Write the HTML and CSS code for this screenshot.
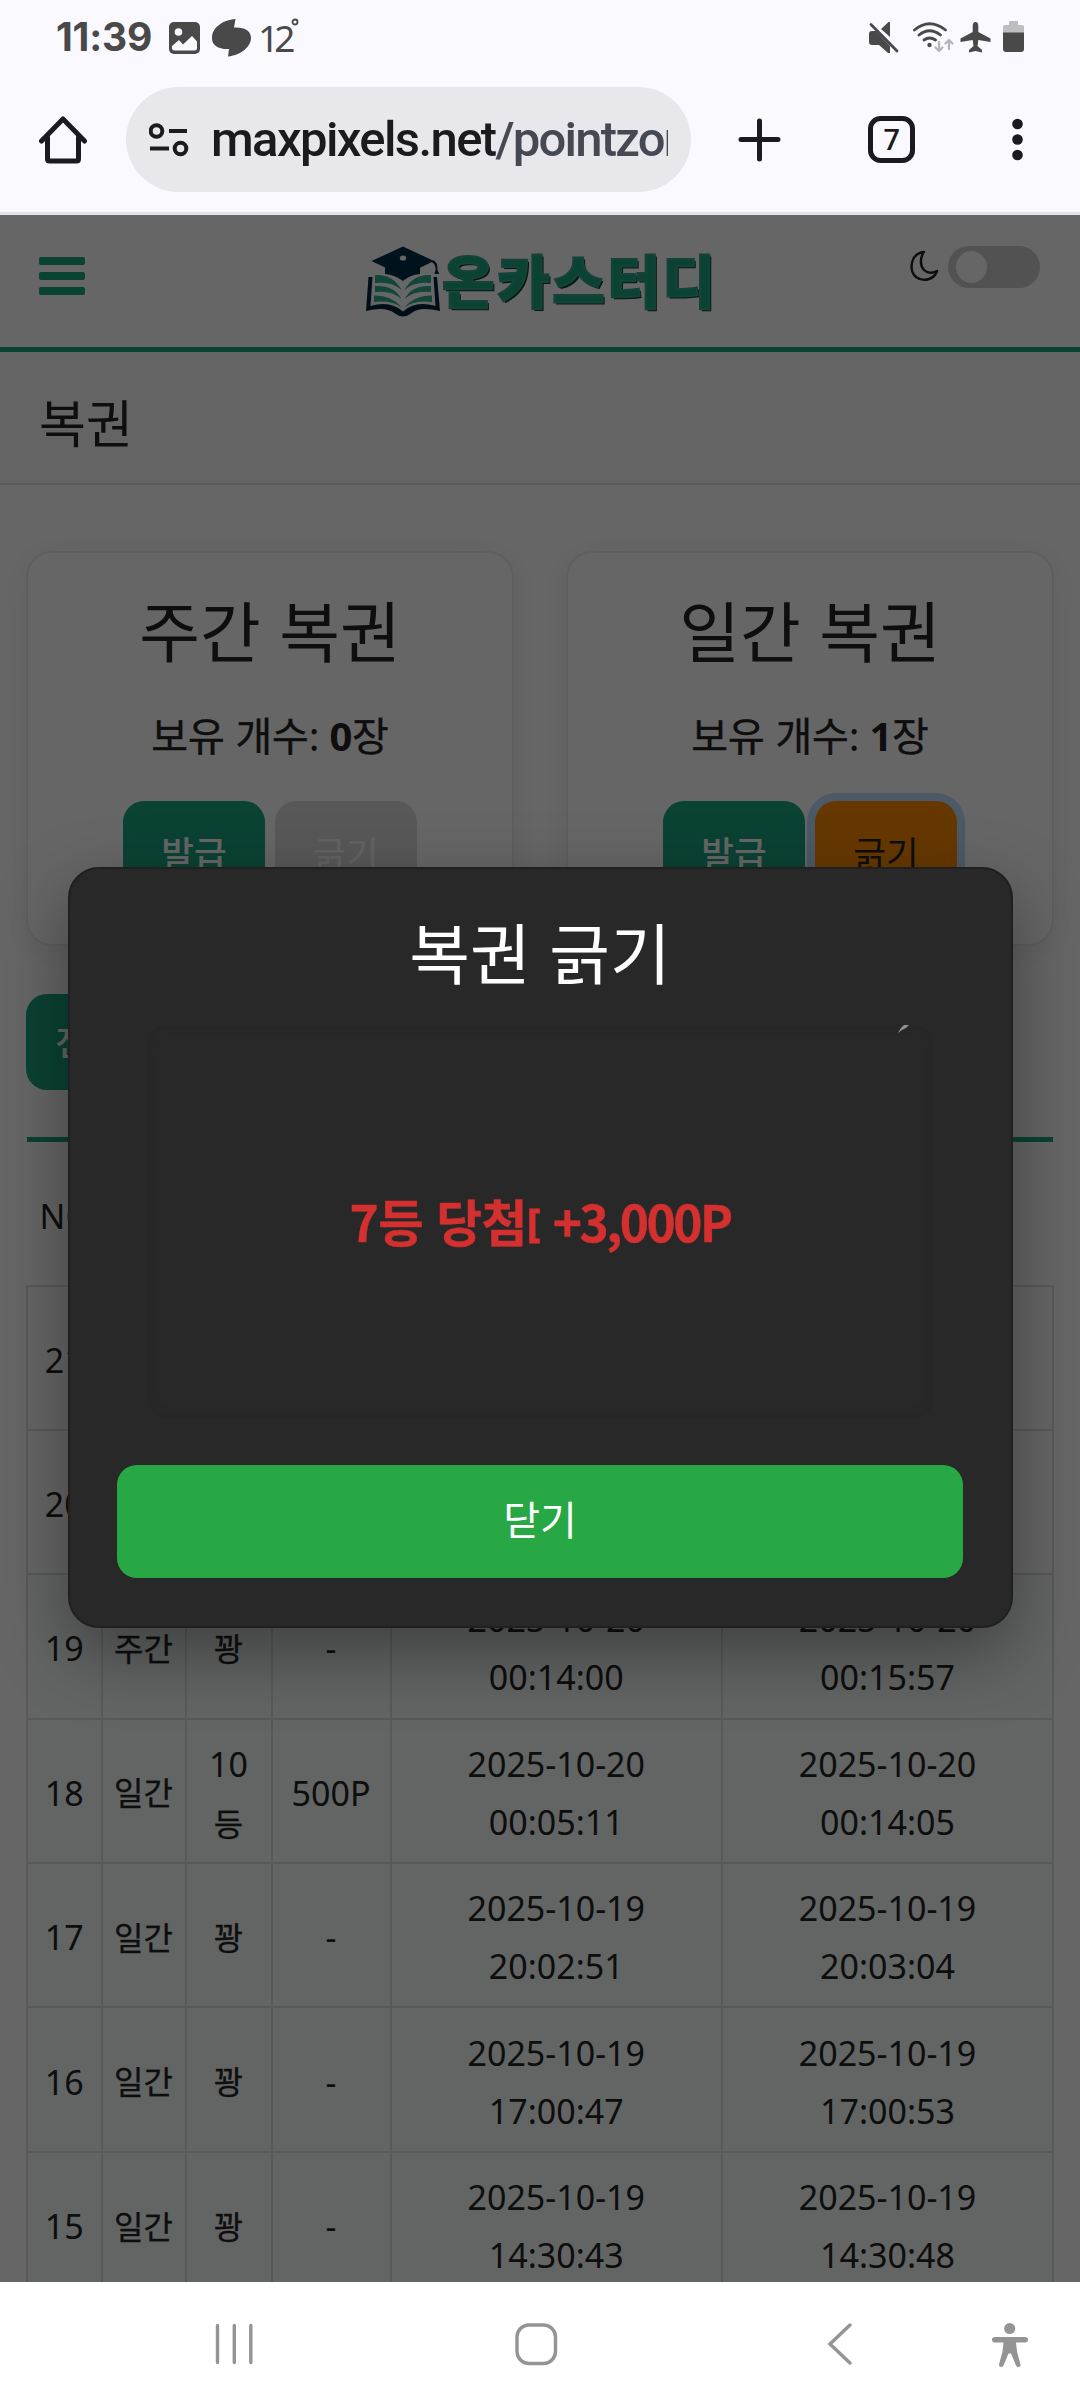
FILE: index.html
```html
<!DOCTYPE html>
<html lang="ko">
<head>
<meta charset="utf-8">
<meta name="viewport" content="width=device-width">
<title>복권</title>
<link rel="stylesheet" href="styles.css">
</head>
<body>
<div class="status">
  <span class="clock">11:39</span>
  <svg class="st-image" width="32" height="32" viewBox="0 0 32 32"><rect width="31" height="32" rx="5" fill="#494949"/><circle cx="9.5" cy="10" r="3.8" fill="#faf9ff"/><path d="M3 24l7-6 4 4.500 9-8.500 5 5.500V26q0 2.500-2.500 2.500h-20Q3 28.500 3 26z" fill="#faf9ff"/></svg>
  <svg class="st-leaf" width="40" height="38" viewBox="0 0 40 38"><path d="M23.500 0 22 8.500C33 8 39 12 39 19c0 8-9 17-23 18.500L17 30C7 30.500 0 27 0 19 0 9 10 1 23.500 0z" fill="#494949"/></svg>
  <span class="temp">12<svg width="8" height="8" viewBox="0 0 8 8"><circle cx="4" cy="4" r="2.500" fill="none" stroke="#494949" stroke-width="1.800"/></svg></span>
  <svg class="st-right" width="160" height="36" viewBox="867 20 160 36">
    <g fill="#494949"><path d="M870 34q0-3 3-3h4l14 15v7h-2l-9-8h-7q-3 0-3-3zM882 29l7.500-7h1.500v15z"/><path d="M872 24.500l26 26.500" stroke="#494949" stroke-width="2.800" stroke-linecap="round"/>
    <circle cx="930.500" cy="45" r="2.200"/></g>
    <g fill="none" stroke="#494949" stroke-width="2.800" stroke-linecap="round"><path d="M915.500 30q15-12.500 31 0M920 35q10.500-8.500 21.500 0M925 40q5.500-4 11.500 0"/></g>
    <g fill="none" stroke="#b4b4b7" stroke-width="2.200" stroke-linecap="round" stroke-linejoin="round"><path d="M940 42v9m-3.500-3.500l3.500 3.500 3.500-3.500M950 49v-9m-3.500 3.500l3.500-3.500 3.500 3.500"/></g>
    <path d="M976.500 22q2.800 0 2.800 4v6l12.200 6.500v3.500l-12.200-2-.8 6 4.500 4v2.500l-6.500-1.500-6.500 1.500V50l4.500-4-.8-6-12.200 2v-3.500l12.200-6.500v-6q0-4 2.800-4z" fill="#494949"/>
    <path d="M1010 25v-3q0-1 1-1h7q1 0 1 1v3h4q2 0 2 2v6h-21v-6q0-2 2-2z" fill="#bebec0"/><path d="M1004 32.500h21V49q0 3-3 3h-15q-3 0-3-3z" fill="#494949"/>
  </svg>
</div>
<div class="toolbar">
  <svg class="tb-home" width="48" height="48" viewBox="0 0 48 48"><path d="M2.500 25 24 3l21.500 22M8.500 21v22q0 2 2 2h27q2 0 2-2V21" fill="none" stroke="#1b1b1f" stroke-width="5" stroke-linecap="round" stroke-linejoin="round"/></svg>
  <div class="omnibox">
    <svg width="40" height="34" viewBox="0 0 40 34"><g fill="none" stroke="#1b1b1f" stroke-width="4"><circle cx="7.500" cy="8" r="5.800"/><circle cx="31.500" cy="25.500" r="5.800"/><path d="M20 8h18M1 25.500h19"/></g></svg>
    <div class="url">maxpixels.net<span>/pointzone</span></div>
  </div>
  <svg class="tb-right" width="300" height="52" viewBox="730 114 300 52"><g fill="none" stroke="#1b1b1f" stroke-width="5" stroke-linecap="round"><path d="M741 139.500h37M759.500 121v38"/><rect x="870.500" y="118.500" width="42" height="42" rx="10"/></g><text x="891.800" y="150" text-anchor="middle" class="tabs">7</text><g fill="#1b1b1f"><circle cx="1017.500" cy="124" r="5.300"/><circle cx="1017.500" cy="139.500" r="5.300"/><circle cx="1017.500" cy="155" r="5.300"/></g></svg>
</div>
<div class="viewport">
  <header class="site-head">
    <div class="burger"><i></i><i></i><i></i></div>
    <div class="logo">
      <svg width="76" height="72" viewBox="0 0 76 72">
        <g fill="#02314a"><path d="M5.500 15 37 0.500 68 15 37 30z"/><path d="M19 21v7q10 1 18 7 7-6 17-7v-7L37 28z"/><path d="M67 14q5 2 4.500 10l1.500 3v1h-4.500v-1l1.200-3q0-6-4-8z"/></g>
        <ellipse cx="37" cy="12" rx="3.200" ry="2.600" fill="#fff"/>
        <path d="M2.500 31h4l-2 29q20-6 32.500 5.500Q49 54 69.500 60l-2-29h3.500l3 34q-21-5-29 2.500-8 6-16 0Q20 60 0 65z" fill="#02243a"/>
        <g fill="#2cae8c"><path d="M9 29q18-1 26.500 15Q26 35 9 37zM9 40q19-1 26.500 13Q26 44 9 46zM8 49.500q18 0 27.500 12Q26 54 8 56zM65 29q-18-1-26.500 15Q48 35 65 37zM65 40q-19-1-26.500 13Q48 44 65 46zM66 49.500q-18 0-27.500 12Q48 54 66 56z"/></g>
      </svg>
      <span class="brand">온카스터디</span>
    </div>
    <div class="theme">
      <svg width="30" height="32" viewBox="0 0 30 32"><path d="M14 2Q5 3 2.500 11-.500 21 6 27q6 4.500 13 2 6-2 8-8-8 4-13-1-6-7-.500-18z" fill="none" stroke="#222" stroke-width="2.400" stroke-linejoin="round"/></svg>
      <div class="switch"><i></i></div>
    </div>
  </header>
  <div class="page-title"><h1>복권</h1></div>
  <main>
    <div class="cards">
      <section class="card"><h2>주간 복권</h2><p>보유 개수<span class="lat">: </span><b>0</b>장</p><div class="acts"><button class="btn green">발급</button><button class="btn off">긁기</button></div></section>
      <section class="card"><h2>일간 복권</h2><p>보유 개수<span class="lat">: </span><b>1</b>장</p><div class="acts"><button class="btn green">발급</button><button class="btn orange">긁기</button></div></section>
    </div>
    <button class="btn green filter">전체</button>
    <table>
      <colgroup><col class="c1"><col class="c2"><col class="c3"><col class="c4"><col class="c5"><col class="c6"></colgroup>
      <thead><tr><th>NO</th><th></th><th></th><th></th><th></th><th></th></tr></thead>
      <tbody>
        <tr><td>21</td><td></td><td></td><td></td><td></td><td></td></tr>
        <tr><td>20</td><td></td><td></td><td></td><td></td><td></td></tr>
        <tr class="read"><td>19</td><td class="ko">주간</td><td class="ko">꽝</td><td>-</td><td>2025-10-20 00:14:00</td><td>2025-10-20 00:15:57</td></tr>
        <tr class="read"><td>18</td><td class="ko">일간</td><td>10<span class="ko">등</span></td><td>500P</td><td>2025-10-20 00:05:11</td><td>2025-10-20 00:14:05</td></tr>
        <tr class="read"><td>17</td><td class="ko">일간</td><td class="ko">꽝</td><td>-</td><td>2025-10-19 20:02:51</td><td>2025-10-19 20:03:04</td></tr>
        <tr class="read"><td>16</td><td class="ko">일간</td><td class="ko">꽝</td><td>-</td><td>2025-10-19 17:00:47</td><td>2025-10-19 17:00:53</td></tr>
        <tr class="read"><td>15</td><td class="ko">일간</td><td class="ko">꽝</td><td>-</td><td>2025-10-19 14:30:43</td><td>2025-10-19 14:30:48</td></tr>
      </tbody>
    </table>
  </main>
  <div class="overlay">
    <div class="modal">
      <h2>복권 긁기</h2>
      <div class="scratch">
        <div class="prize">7등 당첨<small>[</small> <span>+3,000P</span></div>
        <svg class="fleck" width="12" height="8" viewBox="0 0 12 8"><path d="M0 8Q3 2 6 0h5Q8 4 4 5z" fill="#909090"/></svg>
      </div>
      <button class="close">닫기</button>
    </div>
  </div>
</div>
<nav class="sysnav">
  <svg width="1080" height="126" viewBox="0 2282 1080 126"><g fill="none" stroke="#949494" stroke-width="3.400" stroke-linecap="round"><path d="M217.500 2325.500v37M234.300 2325.500v37M250.800 2325.500v37"/><rect x="517" y="2325" width="38.500" height="38.500" rx="12"/><path d="M850 2325l-20 19 20 19"/></g><g fill="#949494"><circle cx="1009.700" cy="2328.500" r="5.500"/><path d="M995 2337h30q3 0 3 2.500 0 3-3 3h-9l1 9 3.500 13q.5 2.500-2 2.500-2 0-2.500-1.500l-5-12h-2.500l-5 12q-.5 1.500-2.500 1.500-2.500 0-2-2.500l3.500-13 1-9h-8.500q-3 0-3-3 0-2.500 3-2.500z"/></g></svg>
</nav>
</body>
</html>
```

FILE: styles.css
```css
* { box-sizing: border-box; margin: 0; padding: 0; }
body { width: 1080px; height: 2408px; overflow: hidden; background: #faf9ff; font-family: "Noto Sans", "Noto Sans CJK KR", sans-serif; color: #252525; }
svg { display: block; flex: none; }
button { border: 0; font: inherit; }
i { display: block; }

.status { height: 75px; display: flex; align-items: flex-start; padding-left: 56px; color: #494949; }
.clock { width: 98px; margin-top: 13px; font: 700 39px/48px Inter, sans-serif; letter-spacing: -.200px; white-space: nowrap; }
.st-image { margin: 22px 0 0 15px; }
.st-leaf { margin: 19px 0 0 11px; }
.temp { display: flex; width: 40px; margin: 14px 0 0 6px; font: 400 37px/48px "Noto Sans", sans-serif; letter-spacing: -5px; }
.temp svg { margin: 4px 0 0 1px; }
.st-right { margin: 20px 0 0 568px; }

.toolbar { height: 140px; border-bottom: 3px solid #e3e2e8; display: flex; align-items: flex-start; padding-left: 39px; }
.tb-home { margin-top: 41px; }
.omnibox { width: 565px; height: 105px; margin: 12px 0 0 39px; border-radius: 53px; background: #e8e7eb; display: flex; align-items: center; padding: 0 21px 0 23px; }
.url { width: 457px; margin-left: 22px; overflow: hidden; white-space: nowrap; font: 500 49px/80px Roboto, sans-serif; letter-spacing: -1.600px; color: #1b1b1f; }
.url span { color: #464952; letter-spacing: -1.800px; }
.tb-right { margin: 39px 0 0 39px; }
.tabs { font: 500 29px Roboto, sans-serif; fill: #1b1b1f; }

.viewport { position: relative; height: 2067px; overflow: hidden; background: #fff; }
.site-head { height: 137px; border-bottom: 5px solid #1ba582; display: flex; align-items: flex-start; padding-left: 39px; }
.burger { width: 46px; margin-top: 42px; display: grid; gap: 7px; }
.burger i { height: 8px; border-radius: 2px; background: #1ba582; }
.logo { width: 360px; margin: 31px 0 0 281px; display: flex; }
.brand { margin-top: -8px; font: 900 57px/80px "Noto Sans CJK KR", sans-serif; letter-spacing: 2.700px; color: #1ba582; -webkit-text-stroke: 2px #38a690; text-shadow: 2px 2px 0 #0b3f2c; white-space: nowrap; }
.theme { margin: 31px 0 0 184px; display: flex; }
.theme svg { margin-top: 4px; }
.switch { width: 92px; height: 42px; margin-left: 8px; padding: 5px 8px; border-radius: 21px; background: #ccc; }
.switch i { width: 31px; height: 32px; border-radius: 50%; background: #fff; }

.page-title { height: 133px; background: #fafafa; border-bottom: 2px solid #dee2e6; padding: 30px 0 0 39px; }
.page-title h1 { font: 400 51px/78px "Noto Sans CJK KR", sans-serif; }

main { padding: 66px 26px 0; }
.cards { display: grid; grid-template-columns: 488px 488px; gap: 52px; }
.card { height: 395px; border: 2px solid #ebebeb; border-radius: 26px; background: #fff; box-shadow: 0 5px 30px rgba(0,0,0,.07); text-align: center; padding-top: 31px; }
.card h2 { font: 400 66px/88px "Noto Sans CJK KR", sans-serif; }
.card p { margin-top: 32px; font: 400 40px/60px "Noto Sans CJK KR", sans-serif; letter-spacing: -.200px; -webkit-text-stroke: .400px #252525; white-space: nowrap; }
.card b, .lat { font-family: "Noto Sans", sans-serif; -webkit-text-stroke: 0; }
.acts { margin-top: 35px; display: flex; justify-content: center; gap: 10px; }
.btn { width: 142px; height: 108px; padding-bottom: 6px; border-radius: 21px; font: 500 35.500px/60px "Noto Sans CJK KR", sans-serif; }
.green { background: #1ba582; color: #fff; }
.off { background: #dcdcdc; color: #f8f8f8; font-weight: 400; }
.orange { background: #ff8c00; color: #252525; font-weight: 400; box-shadow: 0 0 0 8px #bfdeff; }
.filter { display: block; width: 124px; height: 96px; padding-bottom: 3px; margin: 48px 0 47px; }

table { width: 1028px; border-collapse: collapse; table-layout: fixed; font-size: 34px; line-height: 58px; text-align: center; }
.c1 { width: 74.500px; } .c2 { width: 84px; } .c3 { width: 86px; } .c4 { width: 119px; } .c5 { width: 331.500px; } .c6 { width: 331px; }
th { height: 146px; border-top: 5px solid #1ba582; font-weight: 400; }
td { height: 144.400px; border: 2px solid #dedede; padding: 4px 10px 0; }
td:first-child { padding: 4px 0 0; }
th:first-child { padding: 5px 0 0 3px; }
.read { background: #f7fbf9; }
td.ko { padding: 1px 0 0; }
.ko { font-size: 32px; font-family: "Noto Sans CJK KR", sans-serif; font-weight: 400; -webkit-text-stroke: .300px #252525; }
span.ko { display: block; }

.overlay { position: absolute; inset: 0; background: rgba(0,0,0,.6); display: flex; justify-content: center; padding-top: 652px; }
.modal { width: 945px; height: 761px; border: 2px solid #202020; border-radius: 31px; background: #282828; box-shadow: 0 25px 70px rgba(0,0,0,.37); padding: 37px 47px 0; text-align: center; color: #fff; }
.modal h2 { font: 400 66px/88px "Noto Sans CJK KR", sans-serif; }
.scratch { position: relative; width: 787px; height: 393px; margin: 31px auto 0; border-radius: 20px; box-shadow: inset 0 0 14px rgba(0,0,0,.09); display: flex; align-items: center; justify-content: center; font: 700 49.500px/70px "Noto Sans CJK KR", sans-serif; color: #d3302f; }
.prize { padding-bottom: 1px; letter-spacing: -.500px; white-space: nowrap; -webkit-text-stroke: .500px #d3302f; }
.prize span { letter-spacing: -2.500px; }
.prize small { font: 700 40px/40px "Noto Sans", sans-serif; vertical-align: 5px; -webkit-text-stroke: 1px #d3302f; }
.fleck { position: absolute; left: 751px; top: 0; }
.close { width: 846px; height: 113px; margin-top: 47px; padding-bottom: 8px; border-radius: 20px; background: #28a745; color: #fff; font: 400 40px/60px "Noto Sans CJK KR", sans-serif; }

.sysnav { height: 126px; background: #fff; }
```
